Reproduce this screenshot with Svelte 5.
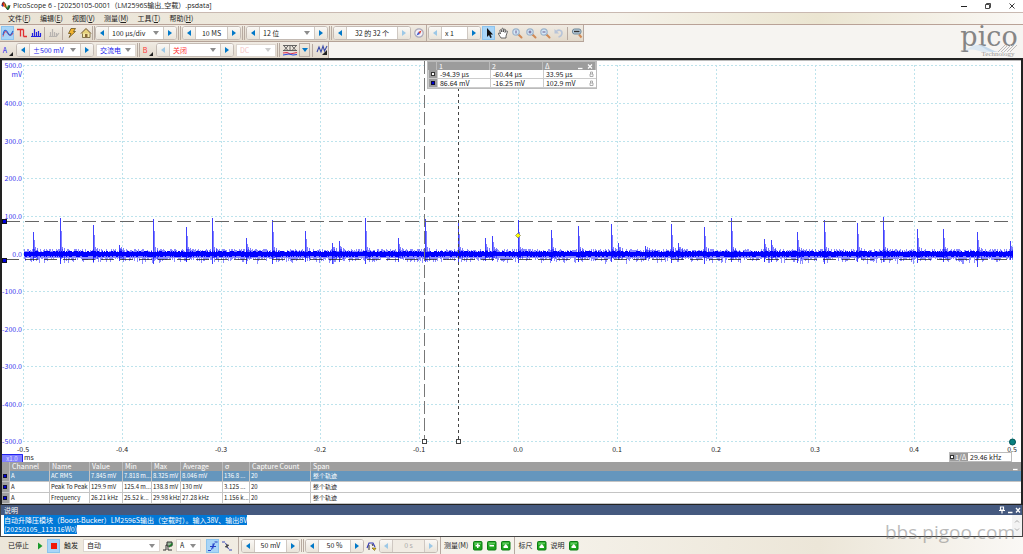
<script>
  const menus = ['文件(F)', '编辑(E)', '视图(V)', '测量(M)', '工具(T)', '帮助(H)'];

  const gridX = [23, 122, 221, 320, 419, 518, 617, 716, 815, 914, 1012];
  const gridY = [65, 103, 141, 178, 216, 254, 291, 329, 366, 404, 441];
  const xLabels = ['-0.5', '-0.4', '-0.3', '-0.2', '-0.1', '0.0', '0.1', '0.2', '0.3', '0.4', '0.5'];
  const yLabels = ['500.0', '400.0', '300.0', '200.0', '100.0', '0.0', '-100.0', '-200.0', '-300.0', '-400.0', '-500.0'];

  // Ringing bursts: x position, top of the spike, lowest point
  const spikes = [
    [33, 232, 261], [60, 218, 264], [93, 225, 262], [119, 245, 261], [153, 219, 264], [186, 227, 262],
    [212, 218, 264], [246, 238, 264], [272, 220, 264], [305, 231, 262], [332, 243, 264], [339, 241, 262],
    [365, 218, 264], [398, 238, 262], [425, 219, 262], [458, 223, 262], [485, 238, 261], [492, 236, 261],
    [518, 220, 263], [551, 230, 261], [578, 226, 262], [611, 224, 262], [618, 243, 260], [645, 246, 260],
    [671, 224, 263], [678, 243, 260], [704, 227, 264], [731, 218, 262], [764, 239, 262], [771, 240, 262],
    [797, 232, 263], [824, 220, 264], [857, 223, 262], [883, 217, 262], [917, 229, 263], [943, 229, 262],
    [977, 232, 267], [1010, 241, 260]
  ];

  let seed = 17;
  function rand() {
    seed = (seed * 16807) % 2147483647;
    return seed / 2147483647;
  }
  let haze = '';
  let core = '';
  for (let x = 24; x <= 1012; x++) {
    const up = 249 + Math.floor(rand() * 4);
    const down = 258 + Math.floor(rand() * rand() * 7);
    haze += `M${x}.5 ${up}V${down}`;
    core += `M${x}.5 ${251 + Math.floor(rand() * 2)}V${256 + Math.floor(rand() * 2)}`;
  }
  const bursts = spikes.map(([x, t, b]) => `M${x}.5 ${t}V${b}`).join('');
  const tails = spikes
    .map(([x, t]) => `M${x + 1}.5 ${Math.round(t + (254 - t) * 0.35)}V258M${x + 2}.5 247V258` + (x < 1008 ? `M${x + 4}.5 248V259` : ''))
    .join('');

  const columns = ['Channel', 'Name', 'Value', 'Min', 'Max', 'Average', 'σ', 'Capture Count', 'Span'];
  const rows = [
    ['A', 'AC RMS', '7.845 mV', '7.818 m...', '8.325 mV', '8.046 mV', '136.8 ...', '20', '整个轨迹'],
    ['A', 'Peak To Peak', '129.9 mV', '125.4 m...', '138.8 mV', '130 mV', '3.125 ...', '20', '整个轨迹'],
    ['A', 'Frequency', '26.21 kHz', '25.52 k...', '29.98 kHz', '27.28 kHz', '1.156 k...', '20', '整个轨迹']
  ];
</script>

{#snippet arrow(label, dir, off)}
  <button class="arrow {dir}" disabled={off} aria-label={label}>
    <svg viewBox="0 0 4 6" width="4" height="6"><path d={dir === 'prev' ? 'M4 0V6L0 3z' : 'M0 0V6L4 3z'} fill="currentColor" /></svg>
  </button>
{/snippet}

{#snippet combo(label, value, size, tone)}
  <span class="combo {size} {tone}">
    <select aria-label={label} disabled={tone === 'off'}><option>{value}</option></select>
    <svg viewBox="0 0 6 4" width="6" height="4"><path d="M0 0H6L3 4z" fill={tone === 'off' ? '#ccc' : '#8c8c8c'} /></svg>
  </span>
{/snippet}

{#snippet spinCombo(label, value, size, tone, offPrev, offNext)}
  <span class="spin">
    {@render arrow('上一个' + label, 'prev', offPrev)}
    {@render combo(label, value, size, tone)}
    {@render arrow('下一个' + label, 'next', offNext)}
  </span>
{/snippet}

{#snippet spinText(label, value, size, offPrev, offNext)}
  <span class="spin">
    {@render arrow('上一个' + label, 'prev', offPrev)}
    <input class={size} aria-label={label} {value} disabled={offPrev && offNext} />
    {@render arrow('下一个' + label, 'next', offNext)}
  </span>
{/snippet}

{#snippet lens(label, mark)}
  <button class="icon" aria-label={label}>
    <svg viewBox="0 0 12 12" width="12" height="12">
      <path d="M7.500 7.500L10.500 10.500" stroke="#d08a55" stroke-width="2" stroke-linecap="round" />
      <circle cx="5" cy="5" r="3.200" fill="#d3e6f6" stroke="#9db4cb" stroke-width="1.200" />
      <path d={mark} stroke="#6a5a8c" stroke-width="1" fill="none" />
    </svg>
  </button>
{/snippet}

{#snippet green(label, mark)}
  <button class="icon" aria-label={label}>
    <svg viewBox="0 0 10 10" width="10" height="10">
      <rect x=".5" y=".5" width="8.500" height="8.500" rx="1" fill="#1ea51e" stroke="#0b7d12" />
      <path d="M1.500 4V1.500H8V3z" fill="#5cc95c" />
      <path d={mark} fill="#fff" />
    </svg>
  </button>
{/snippet}

<div class="app">
  <header class="title">
    <svg viewBox="0 0 10 10" width="10" height="10">
      <path d="M1 5V2L3 1L4 3V6" fill="#e0281e" />
      <path d="M3 2L5 3L6 7L4 7z" fill="#f2b31d" />
      <path d="M0 4L2 4L2 6z" fill="#1b3c9c" />
      <path d="M5 6C6 10 8 10 9 5L7 4L6 7z" fill="#178a3b" />
      <path d="M1 4C2 -1 4 1 5 6C6 10 8 9 9 4" fill="none" stroke="#222" stroke-width=".8" />
    </svg>
    <h1>PicoScope 6 - [20250105-0001（LM2596S输出_空载）.psdata]</h1>
    <div class="window-buttons">
      <button aria-label="最小化"><svg viewBox="0 0 8 8" width="8" height="8"><path d="M1 4.500H7" stroke="#222" /></svg></button>
      <button aria-label="还原"><svg viewBox="0 0 8 8" width="8" height="8"><path d="M1.500 2.500H5.500V6.500H1.500zM2.500 2.500V1.500H6.500V5.500H5.500" fill="none" stroke="#333" stroke-width=".9" /></svg></button>
      <button aria-label="关闭"><svg viewBox="0 0 8 8" width="8" height="8"><path d="M1.500 1.500L6.500 6.500M6.500 1.500L1.500 6.500" stroke="#222" stroke-width=".9" /></svg></button>
    </div>
  </header>

  <nav class="menu">
    {#each menus as m}
      <button>{m.slice(0, 3)}<u>{m[3]}</u>)</button>
    {/each}
  </nav>

  <div class="tools">
    <div class="bars">
      <div class="bar">
        <div class="group">
          <button class="icon on" aria-label="示波器模式"><svg viewBox="0 0 12 12" width="12" height="12"><path d="M1 9.500C2 4 4 3.500 5.500 6S9 9.500 11 6" fill="none" stroke="#d8506c" stroke-width="1.100" /><path d="M1 8C2 2 4 2 6 6S9 8 11 4" fill="none" stroke="#2563d0" stroke-width="1.100" /></svg></button>
          <button class="icon" aria-label="余辉模式"><svg viewBox="0 0 12 12" width="12" height="12"><path d="M1 2.500H4.500V9.500M7.500 2.500V9.500M4.500 2.500H7.500M7.500 9.500H11" fill="none" stroke="#e03030" stroke-width="1.300" /></svg></button>
          <button class="icon" aria-label="频谱模式"><svg viewBox="0 0 12 12" width="12" height="12"><path d="M2.500 9V6M4.500 9V2M6.500 9V5M8.500 9V4M10.500 9V6M1 9.500H11" stroke="#2222dd" stroke-width="1.200" /></svg></button>
          <i class="line"></i>
          <button class="icon" aria-label="显示数字通道" disabled><svg viewBox="0 0 12 12" width="12" height="12"><path d="M2.500 9V5M4.500 9V2M6.500 9V5M8.500 9V6M1 9.500H8M8 10L11 6" stroke="#b7b3b0" stroke-width="1.200" /></svg></button>
          <i class="line"></i>
          <button class="icon" aria-label="自动设置"><svg viewBox="0 0 12 12" width="12" height="12"><path d="M5 1.500H9.500L7.500 4.500H9.500L3 10.500L5 6.500H2.500z" fill="#f2b430" stroke="#5a4310" stroke-width=".7" /></svg></button>
          <button class="icon" aria-label="主页"><svg viewBox="0 0 12 12" width="12" height="12"><path d="M2.500 6V10.500H10V6" fill="#f4e9a8" stroke="#6b5a30" stroke-width=".8" /><path d="M1 6.500L6 1.500L11 6.500" fill="#e6d27a" stroke="#6b5030" /><path d="M5 10V7H7.500V10" fill="#8a6a3a" /></svg></button>
        </div>
        <i class="grip slim"></i>
        <div class="group">{@render spinCombo('时基', '100 µs/div', 'l', 'center', false, false)}</div>
        <i class="grip"></i>
        <div class="group">{@render spinText('采样数', '10 MS', 's', false, false)}</div>
        <i class="grip"></i>
        <div class="group">{@render spinCombo('分辨率', '12 位', 'l', '', false, false)}</div>
        <i class="grip"></i>
        <div class="group">
          {@render spinText('缓冲区', '32 的 32 个', 'm', false, true)}
          <button class="icon" aria-label="缓冲区导航"><svg viewBox="0 0 12 12" width="12" height="12"><circle cx="6" cy="6" r="4.200" fill="#f1f1fa" stroke="#a9a8b8" stroke-width="1.200" /><path d="M8.500 3.500L7 7L5.200 5z" fill="#e03a2c" /><path d="M3.500 8.500L7 7L5.200 5z" fill="#3b55c9" /></svg></button>
        </div>
        <i class="line tall"></i>
        <div class="group">
          {@render spinText('缩放', 'x 1', 'xs left', true, false)}
          <button class="icon on" aria-label="选择"><svg viewBox="0 0 12 12" width="12" height="12"><path d="M4 1V10L6 8L7.300 11L8.800 10.300L7.500 7.500H10z" fill="#111" /></svg></button>
          <button class="icon" aria-label="平移"><svg viewBox="0 0 12 12" width="12" height="12"><path d="M4 11C3 9 1 7 1.500 6.200S3 6.500 3.500 7L2.800 3.500C3 2.500 4 2.500 4.300 3.500L4.800 5V2C5 1 6.200 1 6.400 2V5L7.200 2.500C7.500 1.700 8.500 2 8.400 3L8 5.500L9.300 4C10 3.500 10.700 4 10.300 5L9 9V11z" fill="#fff" stroke="#444" stroke-width=".8" /></svg></button>
          {@render lens('窗口缩放', 'M5 3.500V6.500')}
          {@render lens('放大', 'M3.500 5H6.500M5 3.500V6.500')}
          {@render lens('缩小', 'M3.500 5H6.500')}
          <button class="icon" aria-label="撤消缩放" disabled><svg viewBox="0 0 12 12" width="12" height="12"><path d="M3 5C5 2 9 3 9 6S7 9.500 5.500 10" fill="none" stroke="#b8c4d8" stroke-width="1.600" /><path d="M1.500 2V6.500H6z" fill="#b8c4d8" /></svg></button>
          <i class="line"></i>
          <button class="icon" aria-label="缩放全部"><svg viewBox="0 0 12 12" width="12" height="12"><path d="M8 7.500L10.500 10.500" stroke="#d08a55" stroke-width="2" /><rect x="1.500" y="2" width="8.500" height="5" rx="2" fill="#b9cfdf" stroke="#6f8797" /><path d="M3 4.500H8.500" stroke="#333" stroke-width="1.400" /></svg></button>
        </div>
        <i class="line tall"></i>
      </div>

      <div class="bar">
        <div class="group">
          <button class="channel blue" aria-label="通道 A 选项">A<svg viewBox="0 0 4 4" width="4" height="4"><path d="M4 0V4H0z" fill="#222" /></svg></button>
          {@render spinCombo('A 量程', '±500 mV', 'm', 'blue', false, false)}
          {@render combo('A 耦合', '交流电', 'c', 'blue')}
        </div>
        <i class="grip"></i>
        <div class="group">
          <button class="channel red" aria-label="通道 B 选项">B<svg viewBox="0 0 4 4" width="4" height="4"><path d="M4 0V4H0z" fill="#222" /></svg></button>
          {@render spinCombo('B 量程', '关闭', 'm', 'red', true, false)}
          {@render combo('B 耦合', 'DC', 'c', 'off')}
        </div>
        <i class="grip"></i>
        <div class="group">
          <button class="icon wide" aria-label="数学通道"><svg viewBox="0 0 16 12" width="16" height="12"><path d="M1 1.500H15M1 6.500H15M2 2L6 6.500M6 2L2 6.500M8 2V6.500M10 2L14 6.500M14 2L10 6.500" stroke="#555" stroke-width=".9" /><path d="M1 9L5 8.500L8 10L15 8.500" fill="none" stroke="#e03050" stroke-width="1.100" /><path d="M1 11L7 10L11 11L15 10.500" fill="none" stroke="#2a50e0" /></svg></button>
          <button class="drop" aria-label="数学通道列表"><svg viewBox="0 0 6 4" width="6" height="4"><path d="M0 0H6L3 4z" fill="#0078c8" /></svg></button>
          <i class="line"></i>
          <button class="icon" aria-label="参考波形"><svg viewBox="0 0 12 12" width="12" height="12"><path d="M1 8L3 3L5 8L7 2L8.500 7L11 2" fill="none" stroke="#3c4ca8" stroke-width="1.100" /><path d="M11 6V11H6z" fill="#222" /></svg></button>
        </div>
        <i class="line tall"></i>
      </div>
    </div>

    <div class="logo">
      <b>pico</b>
      <svg viewBox="0 0 60 9" width="60" height="9">
        <path d="M0 8C8 7 12 0 20 1S30 7 35 8H24C18 7 14 3 0 8z" fill="#dce8f2" />
        <path d="M18 1C27 0 32 8 42 8H34C28 8 25 2 18 1z" fill="#c3d8ea" />
        <path d="M39 8L46 1M42 8L49 1M45 8L52 1M48 8L55 1M51 8L58 1" stroke="#bcbcbc" />
      </svg>
      <small>Technology</small>
    </div>
  </div>

  <main>
    <div class="plot">
      <svg class="scope" viewBox="2 61 1019 401" role="img" aria-label="通道 A 波形">
        <g stroke="#bde3ec" stroke-dasharray="2 2">
          {#each gridX as x}<path d="M{x}.5 65V442" />{/each}
          {#each gridY as y}<path d="M23 {y}.5H1013" />{/each}
        </g>
        <g class="ylab">
          {#each yLabels as t, i}<text x="22" y={gridY[i] + 3}>{t}</text>{/each}
          <text x="22" y="77">mV</text>
        </g>
        <g class="xlab">
          {#each xLabels as t, i}<text x={gridX[i]} y="452">{t}</text>{/each}
          <text x="29" y="460">ms</text>
        </g>
        <g fill="none" stroke="#00f">
          <path d={haze} opacity=".45" />
          <path d={core} />
          <path d={bursts} opacity=".75" />
          <path d={tails} opacity=".5" />
        </g>
        <path d="M6 221.500H1013" stroke="#666" stroke-dasharray="14 5" />
        <path d="M6 259.500H1013" stroke="#222" stroke-dasharray="13 6" opacity=".75" />
        <path d="M424.500 61V439" stroke="#777" stroke-dasharray="13 4" />
        <path d="M458.500 88V439" stroke="#444" stroke-dasharray="3 3" />
        <g fill="#fff" stroke="#444"><rect x="422.500" y="439.500" width="4" height="4" /><rect x="456.500" y="439.500" width="4" height="4" /></g>
        <g fill="#00d" stroke="#112"><rect x="2.500" y="219.500" width="4" height="4" /><rect x="2.500" y="258.500" width="4" height="4" /></g>
        <path d="M518 233L520.500 235.500L518 238L515.500 235.500z" fill="#ff0" stroke="#886" stroke-width=".8" />
        <circle cx="1012.500" cy="442" r="3" fill="#088080" stroke="#055" />
        <rect x="2" y="454" width="21" height="8" fill="#8080ff" />
        <path d="M2 454.500H22.500V462" fill="none" stroke="#22e" />
        <text class="scale" x="12" y="461">x1.0</text>
      </svg>

      <div class="legend">
        <table>
          <thead><tr><th class="mark"></th><th>1</th><th>2</th><th class="last">Δ<span>
            <button aria-label="收起"><svg viewBox="0 0 6 7" width="6" height="7"><path d="M1 5.500H5.500" stroke="#fff" stroke-width="1.300" /></svg></button>
            <button aria-label="关闭图例"><svg viewBox="0 0 6 7" width="6" height="7"><path d="M1 1.500L5 5.500M5 1.500L1 5.500" stroke="#fff" stroke-width="1.200" /></svg></button>
          </span></th></tr></thead>
          <tbody>
            <tr><td class="mark"><i class="hollow"></i></td><td>-94.39 µs</td><td>-60.44 µs</td><td>33.95 µs<svg viewBox="0 0 5 6" width="5" height="6"><path d="M1 3H4V5.500H1zM1.500 3V1H3.500V3" fill="none" stroke="#999" stroke-width=".8" /></svg></td></tr>
            <tr><td class="mark"><i></i></td><td>86.64 mV</td><td>-16.25 mV</td><td>102.9 mV<svg viewBox="0 0 5 6" width="5" height="6"><path d="M1 3H4V5.500H1zM1.500 3V1H3.500V3" fill="none" stroke="#999" stroke-width=".8" /></svg></td></tr>
          </tbody>
        </table>
      </div>

      <div class="freq"><span><i class="hollow"></i>1/Δ</span><b>29.46 kHz</b></div>
    </div>

    <table class="measure">
      <colgroup><col class="k0" /><col class="k1" /><col class="k2" /><col class="k3" /><col class="k4" /><col class="k4" /><col class="k5" /><col class="k6" /><col class="k7" /><col /></colgroup>
      <thead><tr><th></th>{#each columns as c, i}<th>{c}{#if i === 8}<button aria-label="收起测量"><svg viewBox="0 0 6 8" width="6" height="8"><path d="M1 6.500H5.500" stroke="#fff" stroke-width="1.300" /></svg></button>{/if}</th>{/each}</tr></thead>
      <tbody>
        {#each rows as r, i}
          <tr class:selected={i === 0}><td><i></i></td>{#each r as c}<td>{c}</td>{/each}</tr>
        {/each}
      </tbody>
    </table>
  </main>

  <section class="notes">
    <h2>说明
      <span>
        <button aria-label="固定"><svg viewBox="0 0 6 8" width="6" height="8"><path d="M1.500 1H4.500V4H1.500zM0 4.500H6M3 4.500V7.500" fill="none" stroke="#fff" stroke-width="1.200" /></svg></button>
        <button aria-label="最小化说明"><svg viewBox="0 0 6 8" width="6" height="8"><path d="M1 6.500H5.500" stroke="#fff" stroke-width="1.500" /></svg></button>
        <button aria-label="关闭说明"><svg viewBox="0 0 6 8" width="6" height="8"><path d="M1 2L5 6.500M5 2L1 6.500" stroke="#fff" stroke-width="1.300" /></svg></button>
      </span>
    </h2>
    <div class="text">
      <p><mark>自动升降压模块（Boost-Bucker）LM2596S输出（空载时）。输入38V、输出8V</mark><br /><mark>(20250105_113116W0)</mark></p>
      <div class="scroll">
        <svg viewBox="0 0 6 4" width="6" height="4"><path d="M1 3.500L3 1.500L5 3.500" fill="none" stroke="#aaa" /></svg>
        <svg viewBox="0 0 6 4" width="6" height="4"><path d="M1 .5L3 2.500L5 .5" fill="none" stroke="#aaa" /></svg>
      </div>
    </div>
  </section>

  <footer>
    <span class="state">已停止</span>
    <button class="icon" aria-label="开始"><svg viewBox="0 0 12 12" width="12" height="12"><path d="M4 2.500V9.500L8.500 6z" fill="#1c9a2c" /></svg></button>
    <button class="icon on" aria-label="停止"><svg viewBox="0 0 12 12" width="12" height="12"><rect x="3" y="3" width="6" height="6" fill="#f01808" /></svg></button>
    <span class="label">触发</span>
    {@render combo('触发模式', '自动', 'xl', '')}
    <button class="icon" aria-label="高级触发"><svg viewBox="0 0 12 12" width="12" height="12"><path d="M1 10H4V5H6V10H10" fill="none" stroke="#333" /><path d="M5 2H10V6H5z" fill="#9ab79a" stroke="#333" /><path d="M7 7L10.500 3.500" stroke="#177d25" stroke-width="1.500" /></svg></button>
    {@render combo('触发源', 'A', 'xs', '')}
    <span class="pair edge">
      <button class="icon on" aria-label="上升沿"><svg viewBox="0 0 12 12" width="12" height="12"><path d="M1 10.500H4L8 2H11" fill="none" stroke="#2740c8" stroke-width="1.100" stroke-dasharray="3 1" /><path d="M3 6.500H9M6 3.500V8.500" stroke="#2740c8" /></svg></button>
      <button class="icon" aria-label="下降沿"><svg viewBox="0 0 12 12" width="12" height="12"><path d="M1 2H4L8 10H11" fill="none" stroke="#3848b8" stroke-dasharray="3 1" /><path d="M4 7L8 5M6 4V8" stroke="#333" /></svg></button>
    </span>
    <i class="line tall"></i>
    {@render spinText('阈值', '50 mV', 's', false, false)}
    <i class="grip slim"></i>
    {@render spinText('预触发', '50 %', 's', false, false)}
    <button class="icon" aria-label="触发延迟"><svg viewBox="0 0 12 12" width="12" height="12"><path d="M1 8L3 3H7L9 7" fill="none" stroke="#3038b8" stroke-width="1.100" /><path d="M6 4L7 6M3 10V5" stroke="#333" /><path d="M6 8H10L8.500 10.500z" fill="#e6c01c" stroke="#665511" stroke-width=".6" /></svg></button>
    {@render spinText('延迟', '0 s', 's', true, true)}
    <i class="line tall"></i>
    <span class="label tight">测量(M)</span>
    <span class="pair">
      {@render green('添加测量', 'M4 2.500H5.500V4H7V5.500H5.500V7H4V5.500H2.500V4H4z')}
      {@render green('删除测量', 'M2.500 4H7V5.500H2.500z')}
      {@render green('编辑测量', 'M2.500 7V5.500L4.800 3L7 5.500V7z')}
    </span>
    <i class="line tall"></i>
    <span class="label tight">标尺</span>
    {@render green('标尺设置', 'M2.500 7V5.500L4.800 3L7 5.500V7z')}
    <span class="label tight">说明</span>
    {@render green('说明设置', 'M2.500 7V5.500L4.800 3L7 5.500V7z')}
  </footer>
  <div class="watermark">bbs.pigoo.com</div>
</div>

<style>
  :global(body) { margin: 0; background: #fff; }
  * { box-sizing: border-box; }
  .app { position: relative; font: 7px/9px "Noto Sans CJK SC", "Noto Sans", sans-serif; color: #222; overflow: hidden; }
  button, input, select { font: inherit; color: inherit; margin: 0; padding: 0; border: 0; background: none; border-radius: 0; }
  button { display: inline-flex; align-items: center; justify-content: center; }
  svg { display: block; flex: none; }

  .title { display: flex; align-items: center; height: 12px; padding: 0 2px 0 1px; }
  h1 { margin: 0 0 0 2px; font: 7px/12px "Open Sans", "Noto Sans CJK SC", sans-serif; flex: 1; white-space: nowrap; }
  .window-buttons { display: flex; gap: 16px; padding-right: 5px; }

  .menu { display: flex; height: 13px; padding-left: 8px; gap: 9px; border-top: 1px solid #c9b9b1; border-bottom: 1px solid #b9a297; background: linear-gradient(90deg, #e9e3d5, #f5f2ea 60%, #ebe5d1 80%, #faf8f5); }
  .menu button { white-space: nowrap; min-width: 23px; justify-content: flex-start; }

  .tools { display: flex; justify-content: space-between; background: #f6f4f1; height: 33px; }
  .bars { display: flex; flex-direction: column; align-items: flex-start; }
  .bar { display: flex; align-items: stretch; height: 17px; padding-left: 1px; background: linear-gradient(#f0ebe3, #e2d9cb); border-bottom: 1px solid #b5a398; }
  .bar:last-child { height: 16px; border: 0; }
  .group { display: flex; align-items: center; gap: 1px; }
  .grip { width: 3px; margin: 1px; border: solid #b7aaa0; border-width: 0 1px; }
  .grip.slim { margin: 1px 0; }
  .line { width: 1px; height: 13px; background: #b7a9a0; margin: 0 1px; }
  .line.tall { height: auto; align-self: stretch; margin: 0 1px; }
  .bar > .line.tall:last-child { margin: 0; }

  .icon { width: 13px; height: 14px; }
  .icon.on { background: #a9d5f7; border: 1px solid #8cc4ee; }
  .icon.wide { width: 17px; }
  .drop { width: 11px; height: 14px; border: 1px solid #b9aea6; }

  .spin { display: flex; height: 14px; border: 1px solid #c3bab3; border-radius: 3px; overflow: hidden; background: #fff; }
  .arrow { width: 13px; background: linear-gradient(#faf8f5, #e9e4da); color: #0078c8; }
  .arrow.prev { border-right: 1px solid #cfc8c2; }
  .arrow.next { border-left: 1px solid #cfc8c2; }
  .arrow:disabled { color: #9cc8e6; }
  input { background: #fff; text-align: center; }
  input.left { text-align: left; padding-left: 3px; }
  input:disabled { background: #f1ece4; color: #aaa; }
  .combo { position: relative; display: flex; align-items: center; height: 12px; background: #fff; }
  .group > .combo, footer > .combo { height: 13px; border: 1px solid #ddd6cf; margin-left: 1px; }
  .combo select { appearance: none; width: 100%; height: 100%; padding-left: 3px; opacity: 1; }
  .combo svg { position: absolute; right: 4px; pointer-events: none; }
  .xs { width: 25px; }
  .s { width: 31px; }
  .c { width: 40px; }
  .m { width: 50px; }
  .l { width: 54px; }
  .xl { width: 77px; }
  .blue { color: #22e; }
  .red { color: #f33; }
  .off { color: #f5c4c4; }
  .channel { width: 14px; height: 14px; gap: 2px; }
  .channel svg { margin-top: 7px; }

  .logo { width: 68px; padding-top: 3px; display: flex; flex-direction: column; align-items: center; color: #858585; font-family: "DejaVu Serif", serif; }
  .logo b { font-size: 27px; line-height: 17px; height: 17px; font-weight: 400; }
  .logo svg { margin-top: -1px; }
  .logo small { font: 7px/7px "Liberation Serif", serif; margin: -2px 0 0 18px; color: #999; }

  main { border: solid #222; border-width: 2px 2px 1px; }
  .plot { position: relative; border-top: 1px solid #bbb; background: #fff; }
  .scope { width: 100%; height: auto; }
  text { font-size: 7px; }
  .ylab text { text-anchor: end; fill: #33e; }
  .xlab text { text-anchor: middle; fill: #222; }
  text.scale { font-size: 6px; fill: #e4e4ff; text-anchor: middle; }

  .legend { position: absolute; left: 41.700%; top: 0; border: 1px solid #bbb; width: 170px; background: #999; }
  .legend table { width: 100%; border-spacing: 0; table-layout: fixed; }
  .legend th { height: 8px; padding: 0 2px; text-align: left; font-weight: 400; color: #fff; line-height: 8px; background: #9c9c9c; border-right: 1px solid #bbb; }
  .legend td { height: 9px; padding: 0 2px; line-height: 8px; background: #fff; border: 1px solid #ccc; border-width: 0 0 1px 1px; white-space: nowrap; }
  .legend .mark { width: 9px; background: #9c9c9c; }
  .legend th span { float: right; display: flex; gap: 4px; }
  .legend th button { height: 8px; }
  .legend td svg { float: right; margin-top: 1px; }
  i.hollow, td i { display: block; width: 4px; height: 4px; background: #00d; border: 1px solid #113; }
  i.hollow { background: #fff; border-color: #333; }

  .freq { position: absolute; right: 9px; bottom: 0; display: flex; width: 63px; height: 10px; border: 1px solid #bbb; background: #fff; }
  .freq span { width: 18px; background: #9c9c9c; color: #fff; display: flex; align-items: center; gap: 1px; }
  .freq b { font-weight: 400; padding-left: 2px; line-height: 8px; }

  .measure { width: 100%; table-layout: fixed; border-collapse: separate; border-spacing: 0; background: #fff; }
  .measure th { height: 9px; line-height: 9px; padding: 0 2px; background: #9f9f9f; color: #fff; font-weight: 400; text-align: left; white-space: nowrap; border-right: 1px solid #bbb; }
  .measure th button { float: right; height: 9px; width: 8px; }
  .measure td { height: 11px; line-height: 10px; font-size: 6px; padding: 0 0 0 1px; border: 1px solid #c4c4c4; border-width: 0 1px 1px 0; white-space: nowrap; overflow: hidden; }
  .measure td:first-child { background: #9f9f9f; }
  .measure th:last-child, .measure td:last-child { border-right: 0; }
  .measure td:last-child { padding-left: 2px; }
  .selected td:not(:first-child) { background: #6596bd; color: #fff; }
  .k0 { width: 8px; }
  .k1 { width: 40px; }
  .k2 { width: 40px; }
  .k3 { width: 33px; }
  .k4 { width: 29px; }
  .k5 { width: 42px; }
  .k6 { width: 27px; }
  .k7 { width: 61px; }

  .notes { border: solid #444; border-width: 0 1px 1px; background: #fff; }
  h2 { margin: 0; display: flex; justify-content: space-between; height: 10px; padding: 0 1px 0 3px; font-size: 7px; line-height: 10px; font-weight: 400; color: #fff; background: #45597f; }
  h2 span { display: flex; align-items: center; gap: 2px; }
  .text { display: flex; justify-content: space-between; height: 21px; padding-left: 3px; }
  p { margin: 1px 0 0; white-space: nowrap; }
  mark { background: #0078d7; color: #fff; }
  .scroll { width: 10px; background: #f3f3f3; display: flex; flex-direction: column; align-items: center; justify-content: space-between; padding: 4px 0; }

  footer { display: flex; align-items: center; height: 17px; padding-left: 8px; gap: 1px; background: linear-gradient(90deg, #ece6da, #f6f3ec 50%, #ece6d8 80%, #faf8f5); }
  footer .grip { height: 13px; }
  .state { width: 24px; white-space: nowrap; }
  .label { padding: 0 3px; white-space: nowrap; }
  .label.tight { padding: 0 2px 0 1px; }
  .pair { display: flex; gap: 1px; }
  .pair.edge { padding: 0 3px 0 4px; }

  .watermark { position: absolute; right: 8px; bottom: 11px; font: 19px/22px "Open Sans", sans-serif; color: #777; opacity: .5; pointer-events: none; }
</style>
